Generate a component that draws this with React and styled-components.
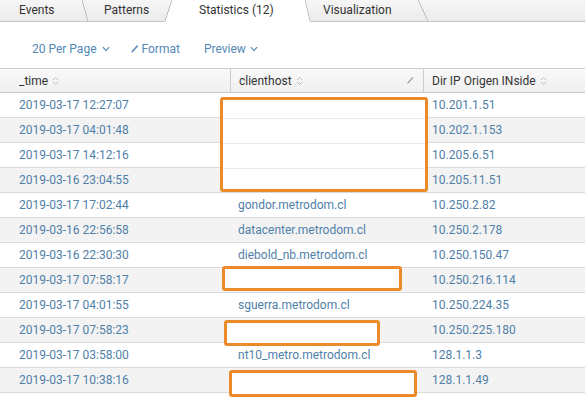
import React from "react";
import styled, { createGlobalStyle, css } from "styled-components";

const GlobalStyle = createGlobalStyle`
  html, body { margin: 0; padding: 0; background: #fff; }
  body { font-family: Roboto, "Liberation Sans", Arial, sans-serif; }
  * { box-sizing: border-box; }
`;

const Page = styled.div`
  position: relative;
  width: 585px;
  height: 403px;
  overflow: hidden;
  background: #fff;
  font-family: Roboto, "Liberation Sans", Arial, sans-serif;
`;

/* ---------- Tabs ---------- */
const TabBar = styled.div`
  display: flex;
  height: 22px;
  background: linear-gradient(#f6f6f6, #ebebeb);
  border-bottom: 1px solid #c4c4c4;
`;

const slash = (dir) =>
  dir === "back"
    ? "linear-gradient(to top right, transparent calc(50% - 0.8px), #b4b4b4 50%, transparent calc(50% + 0.8px))"
    : "linear-gradient(to bottom right, transparent calc(50% - 0.8px), #b4b4b4 50%, transparent calc(50% + 0.8px))";

const Tab = styled.div`
  position: relative;
  flex: 0 0 ${(p) => p.$w}px;
  height: 21px;
  padding-left: ${(p) => p.$pl}px;
  font-size: 12px;
  line-height: 21px;
  color: #333;
  white-space: nowrap;

  ${(p) =>
    p.$active &&
    css`
      &::before {
        content: "";
        position: absolute;
        left: -3px;
        right: -2px;
        top: 0;
        bottom: -1px;
        background: #fff;
        clip-path: polygon(7px 0, calc(100% - 5px) 0, 100% 100%, 0 100%);
      }
    `}

  &::after {
    content: "";
    position: absolute;
    z-index: 2;
    top: 0;
    height: 21px;
    left: ${(p) => p.$lineLeft}px;
    width: ${(p) => p.$lineW}px;
    background: ${(p) => slash(p.$lineDir)};
  }
`;

const TabLabel = styled.span`
  position: relative;
  z-index: 1;
`;

/* ---------- Toolbar ---------- */
const Toolbar = styled.div`
  display: flex;
  align-items: center;
  height: 46px;
  padding: 8px 0 0 32px;
`;

const ToolButton = styled.div`
  display: flex;
  align-items: center;
  gap: ${(p) => p.$gap || 4}px;
  margin-right: ${(p) => p.$mr}px;
  font-size: 12px;
  color: #5289b6;
  white-space: nowrap;
`;

const Chevron = () => (
  <svg width="8" height="6" viewBox="0 0 8 6">
    <path d="M0.8 1.2 L4 4.4 L7.2 1.2" fill="none" stroke="#5289b6" strokeWidth="1.1" />
  </svg>
);

const PencilIcon = ({ color = "#5289b6", w = 9, h = 10 }) => (
  <svg width={w} height={h} viewBox="0 0 9 10">
    <path d="M1 9 L2.2 6.6 L7.2 1 L8.2 2 L3.2 7.7 Z" fill={color} />
  </svg>
);

/* ---------- Table ---------- */
const Table = styled.div`
  display: grid;
  grid-template-columns: 230px 193px 1fr;
`;

const HeadCell = styled.div`
  display: flex;
  align-items: center;
  gap: 4px;
  height: 25px;
  padding-left: ${(p) => p.$pl}px;
  padding-right: 9px;
  background: linear-gradient(#f9f9f9, #f0f0f0);
  border-top: 1px solid #cdcdcd;
  border-bottom: 1px solid #c6c6c6;
  border-left: ${(p) => (p.$first ? "none" : "1px solid #cdcdcd")};
  font-size: 12px;
  color: #333;
  white-space: nowrap;
`;

const HeadSpacer = styled.span`
  flex: 1;
`;

const Cell = styled.div`
  height: 25px;
  padding-left: ${(p) => p.$pl}px;
  line-height: 24px;
  font-size: 12px;
  color: #5080a8;
  background: ${(p) => (p.$alt ? "#f3f3f3" : "#fff")};
  border-bottom: 1px solid #dadada;
  white-space: nowrap;
`;

const SortIcon = () => (
  <svg width="7" height="10" viewBox="0 0 7 10">
    <path d="M1 4 L3.5 1.5 L6 4 M1 6 L3.5 8.5 L6 6" fill="none" stroke="#bdbdbd" strokeWidth="1" />
  </svg>
);

/* ---------- Annotation boxes ---------- */
const Mark = styled.div`
  position: absolute;
  border: 3px solid #ea8a2a;
  border-radius: 3px;
  background: #fff;
  ${(p) =>
    p.$lines &&
    css`
      background: repeating-linear-gradient(#fff 0 24px, #e8e8e8 24px 25px);
      background-position: 0 -6px;
    `}
`;

const rows = [
  ["2019-03-17 12:27:07", "", "10.201.1.51"],
  ["2019-03-17 04:01:48", "", "10.202.1.153"],
  ["2019-03-17 14:12:16", "", "10.205.6.51"],
  ["2019-03-16 23:04:55", "", "10.205.11.51"],
  ["2019-03-17 17:02:44", "gondor.metrodom.cl", "10.250.2.82"],
  ["2019-03-16 22:56:58", "datacenter.metrodom.cl", "10.250.2.178"],
  ["2019-03-16 22:30:30", "diebold_nb.metrodom.cl", "10.250.150.47"],
  ["2019-03-17 07:58:17", "", "10.250.216.114"],
  ["2019-03-17 04:01:55", "sguerra.metrodom.cl", "10.250.224.35"],
  ["2019-03-17 07:58:23", "", "10.250.225.180"],
  ["2019-03-17 03:58:00", "nt10_metro.metrodom.cl", "128.1.1.3"],
  ["2019-03-17 10:38:16", "", "128.1.1.49"],
];

const marks = [
  { l: 220, t: 97, w: 208, h: 95, lines: true },
  { l: 222, t: 266, w: 180, h: 25 },
  { l: 224, t: 320, w: 156, h: 26 },
  { l: 229, t: 370, w: 188, h: 27 },
];

export default function App() {
  return (
    <Page>
      <GlobalStyle />
      <TabBar>
        <Tab $w={85} $pl={19} $lineLeft={82} $lineW={6} $lineDir="back">
          <TabLabel>Events</TabLabel>
        </Tab>
        <Tab $w={83} $pl={19} $lineLeft={80} $lineW={7} $lineDir="fwd">
          <TabLabel>Patterns</TabLabel>
        </Tab>
        <Tab $w={140} $pl={31} $lineLeft={137} $lineW={5} $lineDir="back" $active>
          <TabLabel>Statistics (12)</TabLabel>
        </Tab>
        <Tab $w={115} $pl={15} $lineLeft={110} $lineW={10} $lineDir="back">
          <TabLabel>Visualization</TabLabel>
        </Tab>
      </TabBar>

      <Toolbar>
        <ToolButton $mr={20} $gap={5}>
          20 Per Page <Chevron />
        </ToolButton>
        <ToolButton $mr={24} $gap={3}>
          <PencilIcon /> Format
        </ToolButton>
        <ToolButton $mr={0} $gap={4}>
          Preview <Chevron />
        </ToolButton>
      </Toolbar>

      <Table>
        <HeadCell $first $pl={19}>
          _time <SortIcon />
        </HeadCell>
        <HeadCell $pl={8}>
          clienthost <SortIcon />
          <HeadSpacer />
          <PencilIcon color="#9a9a9a" w={8} h={9} />
        </HeadCell>
        <HeadCell $pl={8}>
          Dir IP Origen INside <SortIcon />
        </HeadCell>

        {rows.map((r, i) => (
          <React.Fragment key={i}>
            <Cell $alt={i % 2 === 1} $pl={19}>{r[0]}</Cell>
            <Cell $alt={i % 2 === 1} $pl={8}>{r[1]}</Cell>
            <Cell $alt={i % 2 === 1} $pl={9}>{r[2]}</Cell>
          </React.Fragment>
        ))}
      </Table>

      {marks.map((m, i) => (
        <Mark
          key={i}
          $lines={m.lines}
          style={{ left: m.l, top: m.t, width: m.w, height: m.h }}
        />
      ))}
    </Page>
  );
}
